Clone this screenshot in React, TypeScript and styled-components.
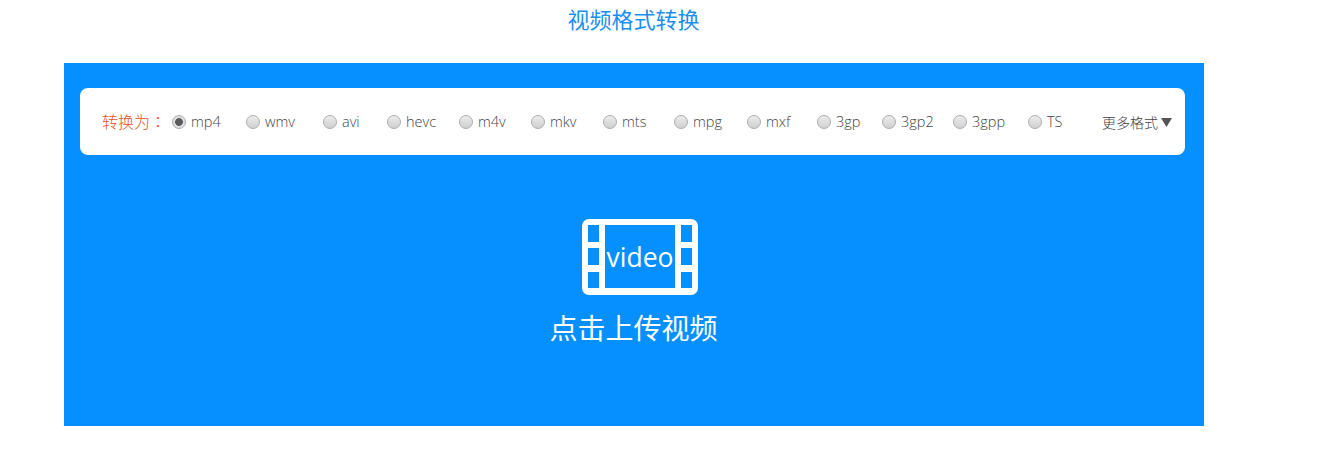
import React from "react";
import styled, { createGlobalStyle } from "styled-components";

const GlobalStyle = createGlobalStyle`
  html, body {
    margin: 0;
    padding: 0;
    background: #fff;
    font-family: "Open Sans", "Noto Sans CJK SC", sans-serif;
  }
`;

const Page = styled.div`
  width: 1140px;
  margin-left: 64px;
`;

const Title = styled.h1`
  margin: 0;
  height: 63px;
  padding-top: 4px;
  padding-right: 1px;
  box-sizing: border-box;
  line-height: 30px;
  font-size: 22px;
  font-weight: 400;
  text-align: center;
  color: #1b8ff0;
`;

const Panel = styled.div`
  height: 363px;
  padding: 25px 19px 0 16px;
  box-sizing: border-box;
  background: #0690ff;
`;

const FormatBar = styled.div`
  display: flex;
  align-items: center;
  height: 67px;
  padding-left: 22px;
  border-radius: 8px;
  background: #fff;
`;

const BarLabel = styled.span`
  width: 70px;
  margin-top: -2px;
  font-family: "Noto Sans CJK TC", sans-serif;
  font-size: 16px;
  font-weight: 300;
  color: #e2532d;
`;

const Option = styled.label<{ $width: number }>`
  display: flex;
  align-items: center;
  gap: 5px;
  width: ${(p) => p.$width}px;
  font-size: 14.5px;
  font-weight: 300;
  color: #444;
`;

const Radio = styled.input`
  appearance: none;
  flex: none;
  width: 14px;
  height: 14px;
  margin: 0;
  border: 1px solid #adadad;
  border-radius: 50%;
  box-sizing: border-box;
  background: linear-gradient(#ececec, #d0d0d0);

  &:checked {
    background: radial-gradient(circle, #5a5a5a 0 3.5px, #dedede 4.2px);
  }
`;

const More = styled.span`
  display: flex;
  align-items: center;
  gap: 3px;
  margin-left: 7px;
  font-size: 14px;
  font-weight: 300;
  color: #444;
`;

const Arrow = styled.svg`
  width: 11px;
  height: 9px;
  margin-top: 1px;
  fill: #555;
`;

const Upload = styled.div`
  display: flex;
  flex-direction: column;
  align-items: center;
  margin-top: 64px;
  margin-left: 2px;
  color: #fff;
`;

const VideoIcon = styled.svg`
  display: block;
  width: 116px;
  height: 76px;
  margin-left: 12px;
`;

const VideoWord = styled.text`
  font-family: "Open Sans", sans-serif;
  font-size: 26.5px;
  font-weight: 400;
  fill: #fff;
  text-anchor: middle;
`;

const UploadLabel = styled.div`
  margin-top: 13px;
  line-height: 40px;
  font-size: 28px;
  font-weight: 400;
`;

const formats: [string, number][] = [
  ["mp4", 74],
  ["wmv", 77],
  ["avi", 64],
  ["hevc", 72],
  ["m4v", 72],
  ["mkv", 72],
  ["mts", 71],
  ["mpg", 73],
  ["mxf", 70],
  ["3gp", 65],
  ["3gp2", 71],
  ["3gpp", 75],
  ["TS", 67],
];

const filmPath =
  "M7 0H109A7 7 0 0 1 116 7V69A7 7 0 0 1 109 76H7A7 7 0 0 1 0 69V7A7 7 0 0 1 7 0Z" +
  "M6 6V23H17V6Z M6 29V46H17V29Z M6 53V69H17V53Z" +
  "M23 6V69H93V6Z" +
  "M99 6V23H110V6Z M99 29V46H110V29Z M99 53V69H110V53Z";

export default function App() {
  return (
    <Page>
      <GlobalStyle />
      <Title>视频格式转换</Title>
      <Panel>
        <FormatBar>
          <BarLabel>转换为：</BarLabel>
          {formats.map(([name, width], i) => (
            <Option key={name} $width={width}>
              <Radio type="radio" name="format" defaultChecked={i === 0} />
              {name}
            </Option>
          ))}
          <More>
            更多格式
            <Arrow viewBox="0 0 11 9">
              <path d="M0 0H11L5.5 9Z" />
            </Arrow>
          </More>
        </FormatBar>
        <Upload>
          <VideoIcon viewBox="0 0 116 76">
            <path d={filmPath} fill="#fff" fillRule="evenodd" />
            <VideoWord x="58" y="48">video</VideoWord>
          </VideoIcon>
          <UploadLabel>点击上传视频</UploadLabel>
        </Upload>
      </Panel>
    </Page>
  );
}
